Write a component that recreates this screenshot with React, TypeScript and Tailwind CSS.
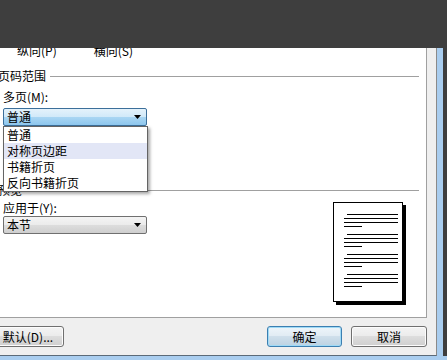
import type { ReactNode } from 'react';

const MULTI_PAGE_OPTIONS = ['普通', '对称页边距', '书籍折页', '反向书籍折页'];

export default function App() {
  return (
    <div className="flex h-[360px] w-[447px] flex-col overflow-hidden bg-[#3e3e3e] font-['Noto_Sans_CJK_SC',sans-serif] text-[12px] leading-[12px] text-black">
      {/* dark strip over the top of the dialog */}
      <div className="h-[48px] shrink-0" />

      <div className="flex h-[308px] shrink-0">
        <div className="flex w-[437px] shrink-0 flex-col border-r border-b border-r-[#8a8a8a] border-b-[#5b6a78] bg-[#efefef]">
          {/* white page area */}
          <div className="relative h-[270px] w-[427px] shrink-0 overflow-hidden border-r border-b border-[#a0a0a0] bg-white">
            <div className="-mt-[3px] flex h-[12px]">
              <span className="ml-[17px]">纵向(P)</span>
              <span className="ml-[37px]">横向(S)</span>
            </div>

            <GroupLabel className="mt-[13px]">页码范围</GroupLabel>
            <div className="mt-[9px] h-[12px] pl-[3px]">多页(M):</div>
            <div className="mt-[5px] ml-[3px]">
              <Combo value="普通" focused />
            </div>

            <GroupLabel className="mt-[58px]">预览</GroupLabel>
            <div className="flex">
              <div className="pl-[3px]">
                <div className="mt-[6px] h-[12px]">应用于(Y):</div>
                <div className="mt-[2px]">
                  <Combo value="本节" />
                </div>
              </div>
              <div className="mt-[6px] mr-[23px] ml-auto">
                <PagePreview />
              </div>
            </div>

            {/* open dropdown list */}
            <div className="absolute top-[78px] left-[3px] w-[145px] border border-[#646464] bg-white py-0 shadow-[2px_2px_3px_rgba(0,0,0,0.35)]">
              {MULTI_PAGE_OPTIONS.map((opt, i) => (
                <div
                  key={opt}
                  className={`flex h-[16px] items-center pl-[3px] ${i === 1 ? 'bg-[#e2e6f6]' : ''}`}
                >
                  {opt}
                </div>
              ))}
            </div>
          </div>

          {/* button bar */}
          <div className="flex items-start pt-[8px] pr-[9px]">
            <Button className="-ml-[8px] w-[72px]">默认(D)...</Button>
            <Button className="ml-auto w-[75px]" focused>
              确定
            </Button>
            <Button className="ml-[9px] w-[76px]">取消</Button>
          </div>
        </div>
        <div className="w-[6px] shrink-0 bg-[#a9cdef]" />
        <div className="flex-1 bg-[#3e3e3e]" />
      </div>

      <div className="h-[4px] shrink-0 bg-[#a9cdef]" />
    </div>
  );
}

function GroupLabel({ children, className }: { children: ReactNode; className?: string }) {
  return (
    <div className={`flex h-[12px] items-center ${className ?? ''}`}>
      <span className="-ml-[2px]">{children}</span>
      <div className="mr-[7px] ml-[4px] h-px flex-1 bg-[#a0a0a0]" />
    </div>
  );
}

function Combo({ value, focused }: { value: string; focused?: boolean }) {
  return (
    <div
      className={`flex h-[18px] w-[144px] items-center rounded-[2px] border pr-[5px] pl-[3px] ${
        focused
          ? 'border-[#3c6f9a] bg-[linear-gradient(to_bottom,#e4f2fb_0%,#d0e9f9_50%,#aad6f3_50%,#8ec7ee_100%)]'
          : 'border-[#707070] bg-[linear-gradient(to_bottom,#f4f4f4_0%,#ebebeb_50%,#dddddd_50%,#cfcfcf_100%)]'
      }`}
    >
      <span>{value}</span>
      <svg className="ml-auto" width="7" height="4" viewBox="0 0 7 4">
        <path d="M0 0h7L3.5 4z" fill="#000" />
      </svg>
    </div>
  );
}

function Button({ children, className, focused }: { children: ReactNode; className?: string; focused?: boolean }) {
  return (
    <div
      className={`flex h-[21px] items-center justify-center rounded-[3px] border ${
        focused
          ? 'border-[#3c7fb1] bg-[linear-gradient(to_bottom,#eef5fa_0%,#e0ebf3_50%,#cfdfeb_50%,#bcd2e2_100%)] shadow-[inset_0_0_0_1px_#9fdaf6]'
          : 'border-[#707070] bg-[linear-gradient(to_bottom,#f4f4f4_0%,#ebebeb_50%,#dddddd_50%,#cfcfcf_100%)] shadow-[inset_0_0_0_1px_#fcfcfc]'
      } ${className ?? ''}`}
    >
      {children}
    </div>
  );
}

function PagePreview() {
  return (
    <div className="flex h-[100px] w-[70px] flex-col gap-[7px] border border-black bg-white pt-[11px] shadow-[3px_3px_0_#000]">
      {[0, 1, 2, 3].map((g) => (
        <div key={g} className="flex flex-col gap-[3px]">
          <div className="ml-[13px] h-px w-[51px] bg-black" />
          <div className="ml-[10px] h-px w-[54px] bg-black" />
          <div className="ml-[10px] h-px w-[54px] bg-black" />
          <div className="ml-[10px] h-px w-[18px] bg-black" />
        </div>
      ))}
    </div>
  );
}
